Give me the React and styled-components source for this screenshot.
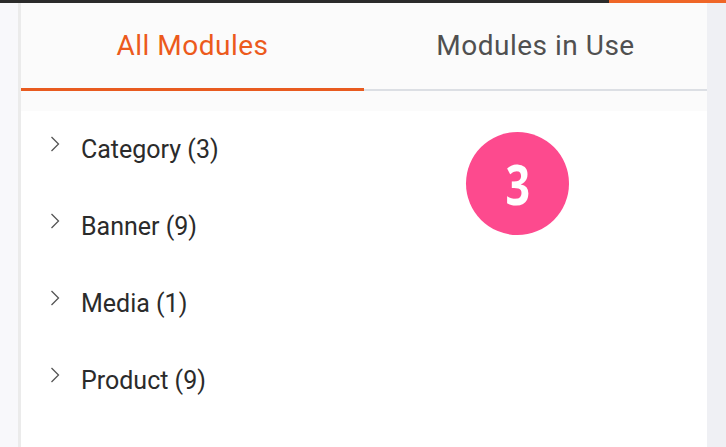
import styled, { createGlobalStyle } from "styled-components";

const Global = createGlobalStyle`
  html, body {
    margin: 0;
    padding: 0;
    background: #ffffff;
  }
  body {
    font-family: Roboto, "Liberation Sans", sans-serif;
  }
`;

const Page = styled.div`
  width: 726px;
  height: 447px;
  display: flex;
  flex-direction: column;
  overflow: hidden;
`;

const TopBar = styled.div`
  height: 3px;
  flex-shrink: 0;
  display: flex;
`;

const TopSegment = styled.div`
  width: ${(p) => p.width};
  flex: ${(p) => (p.width ? "none" : 1)};
  background-color: ${(p) => p.color};
`;

const Body = styled.div`
  flex: 1;
  display: flex;
`;

const LeftGutter = styled.div`
  width: 18px;
  background-color: #f8f8fb;
  border-right: 3px solid #ebebeb;
`;

const RightGutter = styled.div`
  width: 19px;
  background-color: #eff0f4;
`;

const Panel = styled.div`
  flex: 1;
  display: flex;
  flex-direction: column;
  background-color: #ffffff;
`;

const Tabs = styled.div`
  display: flex;
  background-color: #fbfbfb;
`;

const Tab = styled.div`
  flex: 1;
  height: ${(p) => (p.active ? "84px" : "85px")};
  display: flex;
  align-items: center;
  justify-content: center;
  font-size: 28px;
  letter-spacing: 0.5px;
  padding-bottom: 1px;
  color: ${(p) => (p.active ? "#ec5a1c" : "#505050")};
  border-bottom: ${(p) => (p.active ? "3px solid #e85b1f" : "2px solid #dcdfe4")};
`;

const TabGap = styled.div`
  height: 20px;
  background-color: #fbfbfb;
`;

const Content = styled.div`
  position: relative;
  flex: 1;
  padding: 24px 0 0 29px;
`;

const Item = styled.div`
  display: flex;
  align-items: flex-start;
  height: 77px;
`;

const Chevron = styled.svg`
  width: 10px;
  height: 16px;
  margin-top: 1px;
  margin-right: 21px;
  flex-shrink: 0;
`;

const Label = styled.span`
  font-size: 25px;
  color: #2b2b2b;
  line-height: 30px;
`;

const Badge = styled.div`
  position: absolute;
  left: 445px;
  top: 21px;
  width: 103px;
  height: 103px;
  border-radius: 50%;
  background-color: #fd4a8e;
  color: #ffffff;
  font-family: "Open Sans", "DejaVu Sans", sans-serif;
  font-weight: 700;
  font-size: 55px;
  line-height: 1;
  display: flex;
  align-items: center;
  justify-content: center;
`;

const Digit = styled.span`
  display: inline-block;
  transform: scaleX(0.78);
  margin-top: -1px;
`;

const items = ["Category (3)", "Banner (9)", "Media (1)", "Product (9)"];

const App = () => {
  return (
    <Page>
      <Global />
      <TopBar>
        <TopSegment width="609px" color="#2b2b2b" />
        <TopSegment color="#ef6627" />
      </TopBar>
      <Body>
        <LeftGutter />
        <Panel>
          <Tabs>
            <Tab active>All Modules</Tab>
            <Tab>Modules in Use</Tab>
          </Tabs>
          <TabGap />
          <Content>
            {items.map((label) => (
              <Item key={label}>
                <Chevron viewBox="0 0 10 16">
                  <path d="M1.5 1 L8.5 8 L1.5 15" fill="none" stroke="#555" strokeWidth="1.3" />
                </Chevron>
                <Label>{label}</Label>
              </Item>
            ))}
            <Badge>
              <Digit>3</Digit>
            </Badge>
          </Content>
        </Panel>
        <RightGutter />
      </Body>
    </Page>
  );
};

export default App;
